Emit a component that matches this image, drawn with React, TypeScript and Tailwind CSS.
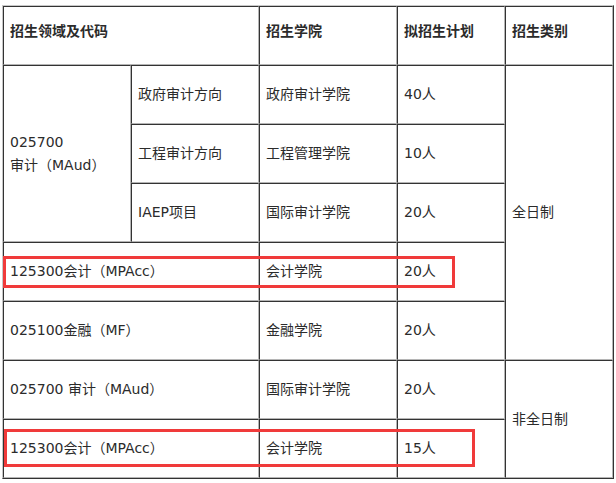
import React from "react";

const cell =
  "border border-solid border-t-[#333] border-l-[#333] border-b-[#b5b5b5] border-r-[#b5b5b5] pl-[6px] align-middle";

export default function App() {
  return (
    <div className="w-[616px] h-[483px] bg-white relative overflow-hidden">
      <div className="absolute inset-0 pt-[5px] pl-[2px]">
        <table
          className="table-fixed border-separate border-spacing-0 w-[611px] text-[14px] text-[#2b2b2b] border border-solid border-t-[#c8c8c8] border-l-[#c8c8c8] border-b-[#333] border-r-[#333]"
          style={{ fontFamily: '"DejaVu Sans", "Noto Sans CJK SC", sans-serif' }}
        >
          <colgroup>
            <col className="w-[128px]" />
            <col className="w-[128px]" />
            <col className="w-[138px]" />
            <col className="w-[108px]" />
            <col className="w-[108px]" />
          </colgroup>
          <tbody>
            <tr className="h-[59px]">
              <td colSpan={2} className={cell + " font-bold pb-[8px]"}>招生领域及代码</td>
              <td className={cell + " font-bold pb-[8px]"}>招生学院</td>
              <td className={cell + " font-bold pb-[8px]"}>拟招生计划</td>
              <td className={cell + " font-bold pb-[8px]"}>招生类别</td>
            </tr>
            <tr className="h-[59px]">
              <td rowSpan={3} className={cell + " leading-[23px]"}>
                025700
                <br />
                审计（MAud）
              </td>
              <td className={cell}>政府审计方向</td>
              <td className={cell}>政府审计学院</td>
              <td className={cell}>40人</td>
              <td rowSpan={5} className={cell}>全日制</td>
            </tr>
            <tr className="h-[59px]">
              <td className={cell}>工程审计方向</td>
              <td className={cell}>工程管理学院</td>
              <td className={cell}>10人</td>
            </tr>
            <tr className="h-[59px]">
              <td className={cell}>IAEP项目</td>
              <td className={cell}>国际审计学院</td>
              <td className={cell}>20人</td>
            </tr>
            <tr className="h-[59px]">
              <td colSpan={2} className={cell}>125300会计（MPAcc）</td>
              <td className={cell}>会计学院</td>
              <td className={cell}>20人</td>
            </tr>
            <tr className="h-[59px]">
              <td colSpan={2} className={cell}>025100金融（MF）</td>
              <td className={cell}>金融学院</td>
              <td className={cell}>20人</td>
            </tr>
            <tr className="h-[59px]">
              <td colSpan={2} className={cell}>025700 审计（MAud）</td>
              <td className={cell}>国际审计学院</td>
              <td className={cell}>20人</td>
              <td rowSpan={2} className={cell}>非全日制</td>
            </tr>
            <tr className="h-[59px]">
              <td colSpan={2} className={cell}>125300会计（MPAcc）</td>
              <td className={cell}>会计学院</td>
              <td className={cell}>15人</td>
            </tr>
          </tbody>
        </table>
      </div>
      <div className="absolute left-[3px] top-[256px] w-[452px] h-[32px] border-[3px] border-solid border-[#f03a3a]" />
      <div className="absolute left-[4px] top-[429px] w-[471px] h-[38px] border-[3px] border-solid border-[#f03a3a]" />
    </div>
  );
}
